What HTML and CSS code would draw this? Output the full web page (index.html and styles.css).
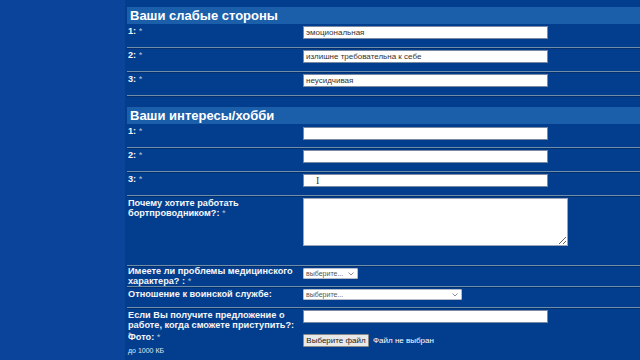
FILE: index.html
```html
<!DOCTYPE html>
<html lang="ru">
<head>
    <meta charset="UTF-8">
    <title>Анкета бортпроводника</title>
    <link rel="stylesheet" href="styles.css">
</head>
<body>
    <div class="wrap">
        <form class="anketa">
            <h2 class="section-title">Ваши слабые стороны</h2>
            <div class="row">
                <label class="label">1: <span class="req">*</span></label>
                <div class="field"><input type="text" class="text" value="эмоциональная"></div>
            </div>
            <div class="row">
                <label class="label">2: <span class="req">*</span></label>
                <div class="field"><input type="text" class="text" value="излишне требовательна к себе"></div>
            </div>
            <div class="row">
                <label class="label">3: <span class="req">*</span></label>
                <div class="field"><input type="text" class="text" value="неусидчивая"></div>
            </div>

            <h2 class="section-title second">Ваши интересы/хобби</h2>
            <div class="row first-after">
                <label class="label">1: <span class="req">*</span></label>
                <div class="field"><input type="text" class="text"></div>
            </div>
            <div class="row">
                <label class="label">2: <span class="req">*</span></label>
                <div class="field"><input type="text" class="text"></div>
            </div>
            <div class="row">
                <label class="label">3: <span class="req">*</span></label>
                <div class="field"><input type="text" class="text"><span class="caret">I</span></div>
            </div>

            <div class="row tall">
                <label class="label">Почему хотите работать бортпроводником?: <span class="req">*</span></label>
                <div class="field"><textarea class="area"></textarea></div>
            </div>
            <div class="row medium">
                <label class="label top">Имеете ли проблемы медицинского характера? : <span class="req">*</span></label>
                <div class="field">
                    <span class="select-wrap small">
                        <select class="select"><option>выберите...</option></select>
                        <svg class="chevron" width="6" height="4" viewBox="0 0 6 4"><path d="M0.5 0.5 L3 3 L5.5 0.5" fill="none" stroke="#8a8f99" stroke-width="1"/></svg>
                    </span>
                </div>
            </div>
            <div class="row medium">
                <label class="label">Отношение к воинской службе:</label>
                <div class="field">
                    <span class="select-wrap wide">
                        <select class="select"><option>выберите...</option></select>
                        <svg class="chevron" width="6" height="4" viewBox="0 0 6 4"><path d="M0.5 0.5 L3 3 L5.5 0.5" fill="none" stroke="#8a8f99" stroke-width="1"/></svg>
                    </span>
                </div>
            </div>
            <div class="row offer no-line">
                <label class="label">Если Вы получите предложение о работе, когда сможете приступить?: <span class="req">*</span></label>
                <div class="field"><input type="text" class="text"></div>
            </div>
            <div class="row photo no-line">
                <div class="label">
                    <label>Фото: <span class="req">*</span></label>
                    <div class="hint">до 1000 КБ</div>
                </div>
                <div class="field file">
                    <span class="file-btn">Выберите файл</span>
                    <span class="file-name">Файл не выбран</span>
                </div>
            </div>
        </form>
    </div>
</body>
</html>
```

FILE: styles.css
```css
body {
    margin: 0;
    background-color: #0a459b;
    font-family: "Liberation Sans", Arial, sans-serif;
    color: #fff;
    overflow: hidden;
}
.wrap {
    margin-left: 125px;
    background-color: #033e8e;
    min-height: 360px;
    padding-top: 7px;
}
.section-title {
    margin: 0 0 0 2px;
    height: 17px;
    line-height: 17px;
    padding-left: 3px;
    font-size: 13px;
    font-weight: bold;
    background-color: #1b5fab;
    color: #fff;
}
.section-title.second {
    margin-top: 11px;
}
.row {
    display: grid;
    grid-template-columns: 176px 1fr;
    height: 23px;
    margin-left: 2px;
    border-bottom: 1px solid #6f8ea8;
    box-shadow: 0 1px 0 #022f70;
}
.row.first-after .field {
    padding-top: 3px;
}
.row.tall {
    height: 69px;
}
.row.medium {
    height: 20px;
}
.row.offer {
    height: 22px;
}
.row.no-line {
    border-bottom: none;
    box-shadow: none;
}
.row.photo {
    height: 29px;
}
.label {
    padding: 2px 4px 0 1px;
    font-size: 9.2px;
    line-height: 10px;
    font-weight: bold;
    color: #f4f6fa;
}
.label.top {
    padding-top: 0;
}
.row.offer .label {
    padding-top: 2px;
}
.req {
    font-weight: normal;
    color: #b7c2d6;
}
.hint {
    margin-top: 5px;
    font-size: 7px;
    line-height: 8px;
    font-weight: normal;
    color: #dde4f0;
}
.field {
    position: relative;
    padding-top: 2px;
}
.text {
    box-sizing: border-box;
    display: block;
    width: 245px;
    height: 13px;
    margin: 0;
    padding: 0 2px;
    border: 1px solid #7a8aa0;
    background: #fff;
    font-family: "Liberation Sans", Arial, sans-serif;
    font-size: 8px;
    color: #333;
    outline: none;
}
.caret {
    position: absolute;
    left: 13px;
    top: 3px;
    font-family: "Liberation Serif", serif;
    font-size: 10px;
    color: #333;
}
.area {
    box-sizing: border-box;
    display: block;
    width: 265px;
    height: 48px;
    margin: 0;
    border: 1px solid #9aa6b8;
    background: #fff;
    resize: vertical;
}
.select-wrap {
    position: relative;
    display: block;
    height: 11px;
}
.select-wrap.small {
    width: 55px;
}
.select-wrap.wide {
    width: 159px;
}
.select {
    box-sizing: border-box;
    display: block;
    width: 100%;
    height: 11px;
    margin: 0;
    padding: 0 0 0 2px;
    border: 1px solid #b5bcc8;
    border-radius: 1px;
    background: #fff;
    -webkit-appearance: none;
    appearance: none;
    font-family: "Liberation Sans", Arial, sans-serif;
    font-size: 7px;
    line-height: 9px;
    color: #555;
}
.chevron {
    position: absolute;
    right: 4px;
    top: 4px;
}
.field.file {
    display: flex;
    align-items: flex-start;
    gap: 4px;
    padding-top: 4px;
}
.file-btn {
    box-sizing: border-box;
    height: 13px;
    width: 66px;
    line-height: 11px;
    text-align: center;
    border: 1px solid #8a8a8a;
    border-radius: 1px;
    background: #e9e9e9;
    color: #222;
    font-size: 8px;
}
.file-name {
    font-size: 8px;
    line-height: 13px;
    color: #fff;
}
```
